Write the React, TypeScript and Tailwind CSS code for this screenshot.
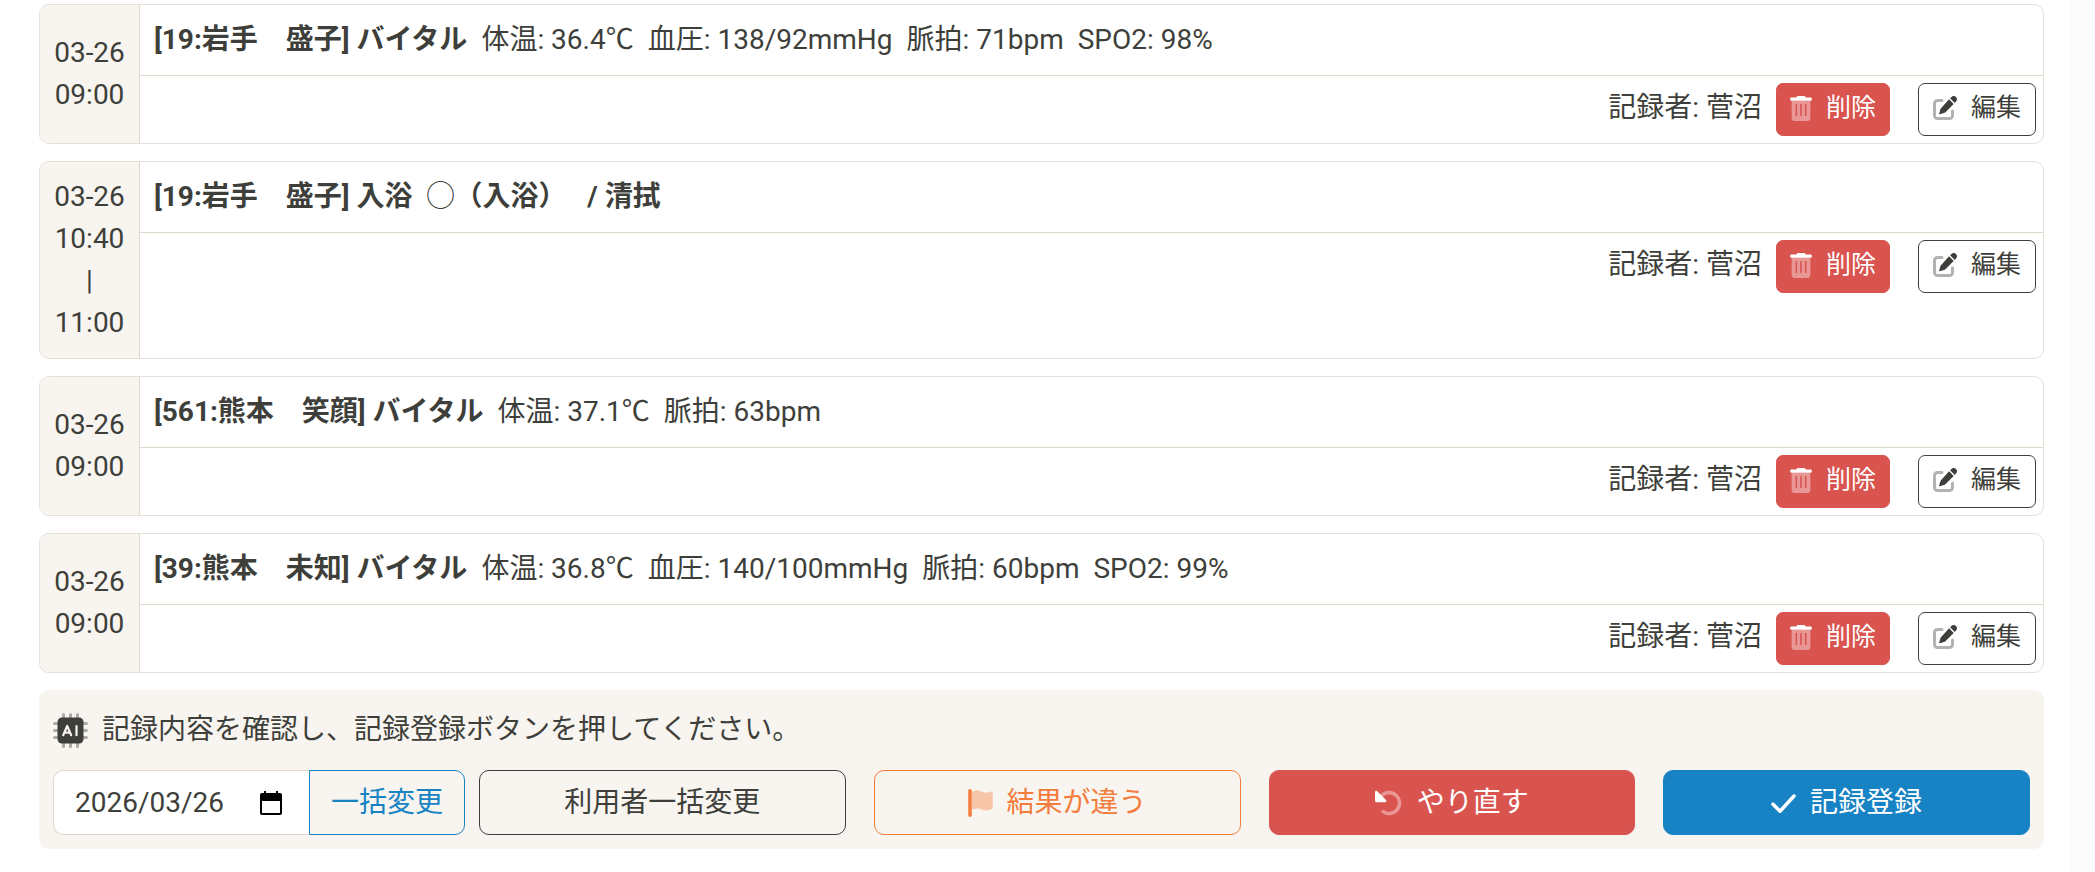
import { useState } from 'react'

type LogRecord = {
  id: number
  time: string[]
  title: string
  temperature?: string
  values?: string[]
  recorder: string
}

const records: LogRecord[] = [
  {
    id: 1,
    time: ['03-26', '09:00'],
    title: '[19:岩手　盛子] バイタル',
    temperature: '36.4',
    values: ['血圧: 138/92mmHg', '脈拍: 71bpm', 'SPO2: 98%'],
    recorder: '菅沼',
  },
  {
    id: 2,
    time: ['03-26', '10:40', '|', '11:00'],
    title: '[19:岩手　盛子] 入浴  ◯（入浴）　 / 清拭',
    recorder: '菅沼',
  },
  {
    id: 3,
    time: ['03-26', '09:00'],
    title: '[561:熊本　笑顔] バイタル',
    temperature: '37.1',
    values: ['脈拍: 63bpm'],
    recorder: '菅沼',
  },
  {
    id: 4,
    time: ['03-26', '09:00'],
    title: '[39:熊本　未知] バイタル',
    temperature: '36.8',
    values: ['血圧: 140/100mmHg', '脈拍: 60bpm', 'SPO2: 99%'],
    recorder: '菅沼',
  },
]

function TrashIcon() {
  return (
    <svg viewBox="0 0 448 512" className="h-[25px] w-[22px]" fill="currentColor" aria-hidden="true">
      <path
        opacity=".4"
        fillRule="evenodd"
        d="M32 96h384v352c0 35-29 64-64 64H96c-35 0-64-29-64-64zm80 80v224c0 22 32 22 32 0V176c0-22-32-22-32 0m96 0v224c0 22 32 22 32 0V176c0-22-32-22-32 0m96 0v224c0 22 32 22 32 0V176c0-22-32-22-32 0"
      />
      <path d="M163.800 0h120.400c12.100 0 23.200 6.800 28.600 17.700L320 32h96c17.700 0 32 14.300 32 32s-14.300 32-32 32H32C14.300 96 0 81.700 0 64s14.300-32 32-32h96l7.200-14.300C140.600 6.800 151.700 0 163.800 0" />
    </svg>
  )
}

function EditIcon() {
  return (
    <svg viewBox="0 0 512 512" className="size-6" aria-hidden="true">
      <path
        d="M192 96H96c-35.300 0-64 28.700-64 64v256c0 35.300 28.700 64 64 64h256c35.300 0 64-28.700 64-64v-96"
        fill="none"
        stroke="currentColor"
        strokeWidth="64"
        strokeLinecap="round"
        opacity=".4"
      />
      <path
        fill="currentColor"
        d="M392.400 21.700c29.200-29.200 68.800-29.200 98 0 29.200 28.600 29.200 68.800 0 98l-27 27-98-98zM343 71l98 98-171 171c-11 11-24 19-39 24l-85 24c-9 2-16-5-14-14l24-85c5-15 13-28 24-39z"
      />
    </svg>
  )
}

function ChipIcon() {
  return (
    <svg viewBox="0 0 35 35" className="size-[35px] shrink-0" aria-hidden="true">
      <path
        d="M10.500 1.500v32M17.500 1.500v32M24.500 1.500v32M1.500 10.500h32M1.500 17.500h32M1.500 24.500h32"
        stroke="currentColor"
        strokeWidth="3"
        strokeLinecap="round"
        opacity=".4"
      />
      <rect x="4.500" y="4.500" width="26" height="26" rx="4.500" fill="currentColor" />
      <path
        d="M10.200 22.200l4-9.200 4 9.200M11.800 19.600h5M23.500 13v9.200"
        fill="none"
        stroke="#f8f4f0"
        strokeWidth="2.200"
        strokeLinecap="round"
        strokeLinejoin="round"
      />
    </svg>
  )
}

function FlagIcon() {
  return (
    <svg viewBox="0 0 448 512" className="h-7 w-[25px]" fill="currentColor" aria-hidden="true">
      <path
        opacity=".4"
        d="M64 48l57-14c42-11 86-6 125 14 44 22 96 25 141 8l18-8c21-10 43 1 43 20v270c0 13-8 25-21 30l-35 13c-46 17-97 15-141-7-40-20-85-25-127-14l-60 15z"
      />
      <path d="M32 0c17.700 0 32 14.300 32 32v448c0 17.700-14.300 32-32 32S0 497.700 0 480V32C0 14.300 14.300 0 32 0" />
    </svg>
  )
}

function UndoIcon() {
  return (
    <svg viewBox="0 0 512 512" className="size-7" aria-hidden="true">
      <path
        d="M121 121c75-75 196-75 271 0s75 196 0 271c-67 67-169 74-243 22"
        fill="none"
        stroke="currentColor"
        strokeWidth="64"
        strokeLinecap="round"
        opacity=".4"
      />
      <path
        fill="currentColor"
        d="M24 240c-13 0-24-11-24-24V56c0-21 26-32 41-17l160 160c15 15 4 41-17 41z"
      />
    </svg>
  )
}

function CheckIcon() {
  return (
    <svg viewBox="0 0 448 512" className="h-7 w-[25px]" aria-hidden="true">
      <path
        d="M32 278l128 128L416 128"
        fill="none"
        stroke="currentColor"
        strokeWidth="64"
        strokeLinecap="round"
        strokeLinejoin="round"
      />
    </svg>
  )
}

function CalendarIcon() {
  return (
    <svg viewBox="0 0 24 26" className="h-[26px] w-6" fill="currentColor" aria-hidden="true">
      <path
        fillRule="evenodd"
        d="M5 1h2v2h10V1h2v2h2a2 2 0 0 1 2 2v18a2 2 0 0 1-2 2H3a2 2 0 0 1-2-2V5a2 2 0 0 1 2-2h2zM3 11v12h18V11z"
      />
    </svg>
  )
}

function RecordCard({ record }: { record: LogRecord }) {
  return (
    <article className="flex overflow-hidden rounded-[10px] border border-[#e6e0d6] bg-white">
      <div className="flex w-[100px] shrink-0 flex-col justify-center border-r border-[#dfd7ca] bg-[#f8f5f0] py-3.5 text-center">
        {record.time.map((line) => (
          <span key={line}>{line}</span>
        ))}
      </div>
      <div className="min-w-0 flex-1">
        <div className="flex gap-3.5 border-b border-[#dfd7ca] p-3.5">
          <strong className="font-bold whitespace-pre">{record.title}</strong>
          {record.temperature && (
            <span>
              体温: {record.temperature}
              <span className="font-['Noto_Sans_CJK_JP',sans-serif] leading-none">℃</span>
            </span>
          )}
          {record.values?.map((value) => (
            <span key={value}>{value}</span>
          ))}
        </div>
        <div className="flex items-start justify-end p-[7px]">
          <span className="mt-1 mr-3.5">記録者: {record.recorder}</span>
          <button
            type="button"
            className="mr-7 flex h-[53px] items-start gap-3.5 rounded-[7px] border border-[#d9534f] bg-[#d9534f] px-[13px] pt-1.5 text-[25px] leading-9 text-white"
          >
            <span className="flex h-9 items-center">
              <TrashIcon />
            </span>
            削除
          </button>
          <button
            type="button"
            className="flex h-[53px] items-start gap-3.5 rounded-[7px] border border-[#3e3f3a] px-3.5 pt-1.5 text-[25px] leading-9"
          >
            <span className="flex h-9 items-center">
              <EditIcon />
            </span>
            編集
          </button>
        </div>
      </div>
    </article>
  )
}

export default function App() {
  const [date, setDate] = useState('2026/03/26')

  return (
    <div
      lang="ja"
      className="min-h-screen bg-[#fcfcfc] pr-[25px] font-[Roboto,'Noto_Sans_CJK_JP',sans-serif] text-[28px] leading-[42px] text-[#3e3f3a]"
    >
      <main className="flex min-h-screen flex-col gap-[17px] bg-white pt-1 pr-[26px] pl-[39px]">
        {records.map((record) => (
          <RecordCard key={record.id} record={record} />
        ))}

        <section className="rounded-[10px] bg-[#f8f5f0] p-3.5">
          <p className="mb-3.5 flex h-[52px] items-center gap-3.5">
            <ChipIcon />
            記録内容を確認し、記録登録ボタンを押してください。
          </p>
          <div className="flex h-[65px] gap-3.5">
            <div className="flex w-[412px] shrink-0">
              <div className="flex flex-1 items-center rounded-l-[10px] border border-r-0 border-[#dfd7ca] bg-white pr-[26px] pl-[21px]">
                <input
                  type="text"
                  aria-label="日付"
                  value={date}
                  onChange={(e) => setDate(e.target.value)}
                  className="w-0 min-w-0 flex-1 outline-none"
                />
                <button type="button" aria-label="カレンダーを開く" className="text-black">
                  <CalendarIcon />
                </button>
              </div>
              <button type="button" className="w-[156px] rounded-r-[10px] border border-[#1783c4] text-[#1783c4]">
                一括変更
              </button>
            </div>
            <button type="button" className="flex-1 rounded-[10px] border border-[#3e3f3a]">
              利用者一括変更
            </button>
            <button
              type="button"
              className="ml-3.5 flex flex-1 items-center justify-center gap-3.5 rounded-[10px] border border-[#f47c3c] text-[#f47c3c]"
            >
              <FlagIcon />
              結果が違う
            </button>
            <button
              type="button"
              className="ml-3.5 flex flex-1 items-center justify-center gap-3.5 rounded-[10px] border border-[#d9534f] bg-[#d9534f] text-white"
            >
              <UndoIcon />
              やり直す
            </button>
            <button
              type="button"
              className="ml-3.5 flex flex-1 items-center justify-center gap-3.5 rounded-[10px] border border-[#1783c4] bg-[#1783c4] text-white"
            >
              <CheckIcon />
              記録登録
            </button>
          </div>
        </section>
      </main>
    </div>
  )
}
